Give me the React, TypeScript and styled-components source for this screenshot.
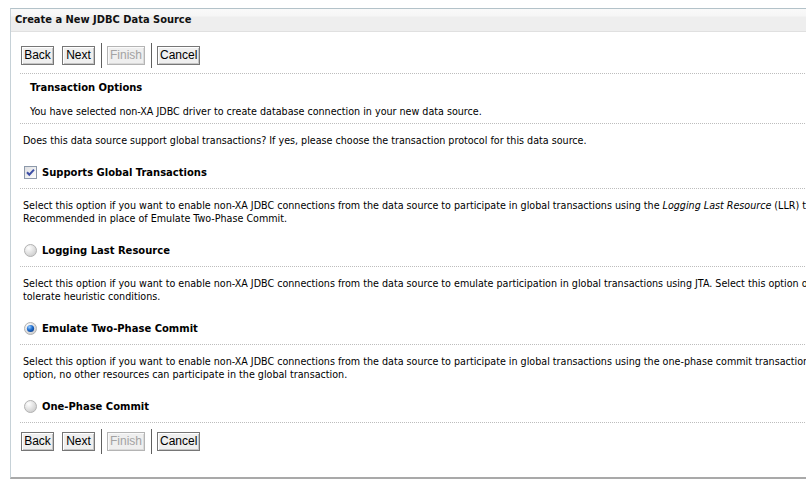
import React from "react";
import styled, { createGlobalStyle } from "styled-components";

const Global = createGlobalStyle`
  html, body {
    margin: 0;
    padding: 0;
    background: #ffffff;
    overflow: hidden;
  }
  body {
    font-family: "DejaVu Sans Condensed", "DejaVu Sans", sans-serif;
    font-stretch: condensed;
    font-size: 10.65px;
    color: #000;
  }
`;

const Page = styled.div`
  padding: 8px 0 0 10px;
  width: 1200px;
`;

const Panel = styled.div`
  width: 1100px;
  border-top: 1px solid #b3c2c9;
  border-left: 1px solid #c6d1d7;
  border-bottom: 2px solid #a9a9a9;
  box-shadow: 0 1px 0 #dcdcdc;
`;

const TitleBar = styled.div`
  height: 22px;
  line-height: 22px;
  padding-left: 4px;
  background: linear-gradient(#f9f9f9 0, #f6f6f6 7px, #eeeeee 8px, #eeeeee 100%);
  border-bottom: 1px solid #e0e0e0;
  font-weight: bold;
  font-size: 11px;
  color: #111;
  white-space: nowrap;
`;

const Body = styled.div`
  padding-left: 9px;
`;

const Toolbar = styled.div<{ $top: number; $bottom: number; $divider?: boolean }>`
  display: flex;
  align-items: center;
  padding: ${(p) => p.$top}px 0 ${(p) => p.$bottom}px 1px;
  border-bottom: ${(p) => (p.$divider ? "1px dotted #bdbdbd" : "none")};
`;

const Button = styled.button`
  height: 19px;
  min-width: 33px;
  padding: 0 2px;
  margin: 0;
  font-family: "Liberation Sans", Arial, sans-serif;
  font-size: 12px;
  line-height: 17px;
  color: #000;
  background: #efefef;
  border: 1px solid #767676;
  box-shadow: inset 1px 1px 0 #ffffff, inset -1px -1px 0 #c4c4c4;
  border-radius: 0;
  & + & {
    margin-left: 8px;
  }
  &:disabled {
    color: #a3a3a3;
    border-color: #b4b4b4;
    box-shadow: inset 1px 1px 0 #fafafa, inset -1px -1px 0 #dadada;
  }
`;

const Separator = styled.span`
  width: 1px;
  height: 25px;
  background: #5f5f5f;
  margin: 0 5px 0 6px;
`;

const Section = styled.div`
  padding: 7px 10px 5px;
  border-bottom: 1px dotted #bdbdbd;
`;

const SectionTitle = styled.div`
  font-weight: bold;
  font-size: 11.1px;
  line-height: 13px;
`;

const SectionText = styled.div`
  line-height: 13px;
  margin-top: 11px;
  white-space: nowrap;
`;

const Question = styled.p`
  margin: 0;
  padding: 10px 3px;
  line-height: 13px;
  white-space: nowrap;
`;

const OptionRow = styled.label`
  display: flex;
  align-items: center;
  gap: 5px;
  height: 13px;
  padding: 9px 4px 9px;
  border-bottom: 1px dotted #bdbdbd;
  font-weight: bold;
  font-size: 11.1px;
  line-height: 13px;
  white-space: nowrap;
`;

const Description = styled.p`
  margin: 0;
  padding: 10px 3px;
  line-height: 13px;
  white-space: nowrap;
`;

const CheckIcon = () => (
  <svg width="13" height="13" viewBox="0 0 13 13">
    <defs>
      <linearGradient id="cbg" x1="0" y1="0" x2="1" y2="1">
        <stop offset="0" stopColor="#dcdde0" />
        <stop offset="1" stopColor="#ffffff" />
      </linearGradient>
    </defs>
    <rect x="0.5" y="0.5" width="12" height="12" fill="url(#cbg)" stroke="#8d99aa" />
    <path d="M3 6.2 L5.3 8.7 L10 3.6" fill="none" stroke="#3e4fa6" strokeWidth="2" />
  </svg>
);

const RadioIcon = ({ checked }: { checked?: boolean }) => (
  <svg width="13" height="13" viewBox="0 0 13 13">
    <defs>
      <radialGradient id="rbg" cx="0.35" cy="0.3" r="0.8">
        <stop offset="0" stopColor="#ffffff" />
        <stop offset="1" stopColor="#c9c9c9" />
      </radialGradient>
      <radialGradient id="rdot" cx="0.35" cy="0.3" r="0.8">
        <stop offset="0" stopColor="#9fd0ff" />
        <stop offset="0.5" stopColor="#1f6fd0" />
        <stop offset="1" stopColor="#0a3c8c" />
      </radialGradient>
    </defs>
    <circle cx="6.5" cy="6.5" r="6" fill="url(#rbg)" stroke="#b2b2b2" />
    {checked && <circle cx="6.5" cy="6.5" r="3.6" fill="url(#rdot)" />}
  </svg>
);

const Buttons = ({ top, bottom, divider }: { top: number; bottom: number; divider?: boolean }) => (
  <Toolbar $top={top} $bottom={bottom} $divider={divider}>
    <Button>Back</Button>
    <Button>Next</Button>
    <Separator />
    <Button disabled>Finish</Button>
    <Separator />
    <Button>Cancel</Button>
  </Toolbar>
);

export default function App() {
  return (
    <>
      <Global />
      <Page>
        <Panel>
          <TitleBar>Create a New JDBC Data Source</TitleBar>
          <Body>
            <Buttons top={11} bottom={5} divider />
            <Section>
              <SectionTitle>Transaction Options</SectionTitle>
              <SectionText>You have selected non-XA JDBC driver to create database connection in your new data source.</SectionText>
            </Section>
            <Question>
              Does this data source support global transactions? If yes, please choose the transaction protocol for this data source.
            </Question>
            <OptionRow>
              <CheckIcon />
              Supports Global Transactions
            </OptionRow>
            <Description>
              Select this option if you want to enable non-XA JDBC connections from the data source to participate in global transactions using the <i>Logging Last Resource</i> (LLR) transaction optimization.
              <br />
              Recommended in place of Emulate Two-Phase Commit.
            </Description>
            <OptionRow>
              <RadioIcon />
              Logging Last Resource
            </OptionRow>
            <Description>
              Select this option if you want to enable non-XA JDBC connections from the data source to emulate participation in global transactions using JTA. Select this option only if your application can
              <br />
              tolerate heuristic conditions.
            </Description>
            <OptionRow>
              <RadioIcon checked />
              Emulate Two-Phase Commit
            </OptionRow>
            <Description>
              Select this option if you want to enable non-XA JDBC connections from the data source to participate in global transactions using the one-phase commit transaction processing. With this
              <br />
              option, no other resources can participate in the global transaction.
            </Description>
            <OptionRow>
              <RadioIcon />
              One-Phase Commit
            </OptionRow>
            <Buttons top={6} bottom={23} />
          </Body>
        </Panel>
      </Page>
    </>
  );
}
